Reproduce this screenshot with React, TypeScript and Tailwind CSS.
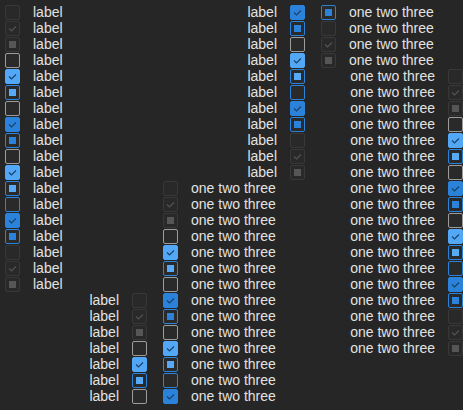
type State = 'dis' | 'disCheck' | 'disMixed' | 'off' | 'hoverCheck' | 'hoverMixed' | 'check' | 'mixed' | 'focusOff'

// the 18 states, in the order each group shows them
const states: State[] = [
  'dis', 'disCheck', 'disMixed',
  'off', 'hoverCheck', 'hoverMixed',
  'off', 'check', 'mixed',
  'off', 'hoverCheck', 'hoverMixed',
  'focusOff', 'check', 'mixed',
  'dis', 'disCheck', 'disMixed',
]

function Box({ state }: { state: State }) {
  const base = 'relative flex h-[15px] w-[15px] shrink-0 items-center justify-center rounded-[2px] border'
  const look: Record<State, string> = {
    dis: 'border-[#383838] bg-[#292929]',
    disCheck: 'border-[#383838] bg-[#292929]',
    disMixed: 'border-[#383838] bg-[#292929]',
    off: 'border-[#9c9c9c] bg-[#2a2a2a]',
    focusOff: 'border-[#2a82da] bg-[#2a2a2a]',
    hoverCheck: 'border-[#52a8f6] bg-[#52a8f6]',
    hoverMixed: 'border-[#2a82da] bg-[#2a2a2a]',
    check: 'border-[#2a82da] bg-[#2a82da]',
    mixed: 'border-[#2a82da] bg-[#2a2a2a]',
  }
  const tick =
    state === 'check' || state === 'hoverCheck' ? '#1d4064' : state === 'disCheck' ? '#535353' : null
  const square =
    state === 'mixed' ? 'bg-[#2a82da]' : state === 'hoverMixed' ? 'bg-[#56aaf6]' : state === 'disMixed' ? 'bg-[#565656]' : null
  return (
    <span className={`${base} ${look[state]}`}>
      {tick && (
        <svg width="13" height="13" viewBox="0 0 13 13" fill="none">
          <path d="M3 6.5 L5.5 9 L10 4.5" stroke={tick} strokeWidth="1.1" />
        </svg>
      )}
      {square && <span className={`h-[7px] w-[7px] ${square}`} />}
    </span>
  )
}

function Item({ state, text, rtl }: { state: State; text: string; rtl?: boolean }) {
  return (
    <div className={`flex h-4 items-center gap-[13px] whitespace-nowrap ${rtl ? 'justify-end' : ''}`}>
      {rtl && <span>{text}</span>}
      <Box state={state} />
      {!rtl && <span>{text}</span>}
    </div>
  )
}

function Column({ list, text, rtl, className }: { list: State[]; text: string; rtl?: boolean; className: string }) {
  return (
    <div className={`flex shrink-0 flex-col ${className}`}>
      {list.map((s, i) => (
        <Item key={i} state={s} text={text} rtl={rtl} />
      ))}
    </div>
  )
}

export default function App() {
  return (
    <div
      className="flex h-[410px] w-[463px] overflow-hidden bg-[#262626] text-[14px] leading-4 text-[#e2e2e2]"
      style={{ fontFamily: '"Liberation Sans", Arial, sans-serif' }}
    >
      <Column list={states} text="label" className="ml-[5px] w-[84px] pt-1" />
      <Column list={states.slice(0, 7)} text="label" rtl className="w-[58px] pt-[292px]" />
      <Column list={states.slice(0, 14)} text="one two three" className="ml-4 w-[85px] pt-[180px]" />
      <Column list={states.slice(7)} text="label" rtl className="w-[57px] pt-1" />
      <Column list={states.slice(14)} text="one two three" className="ml-4 w-[29px] pt-1" />
      <Column list={states} text="one two three" rtl className="w-[113px] pt-[68px]" />
    </div>
  )
}
